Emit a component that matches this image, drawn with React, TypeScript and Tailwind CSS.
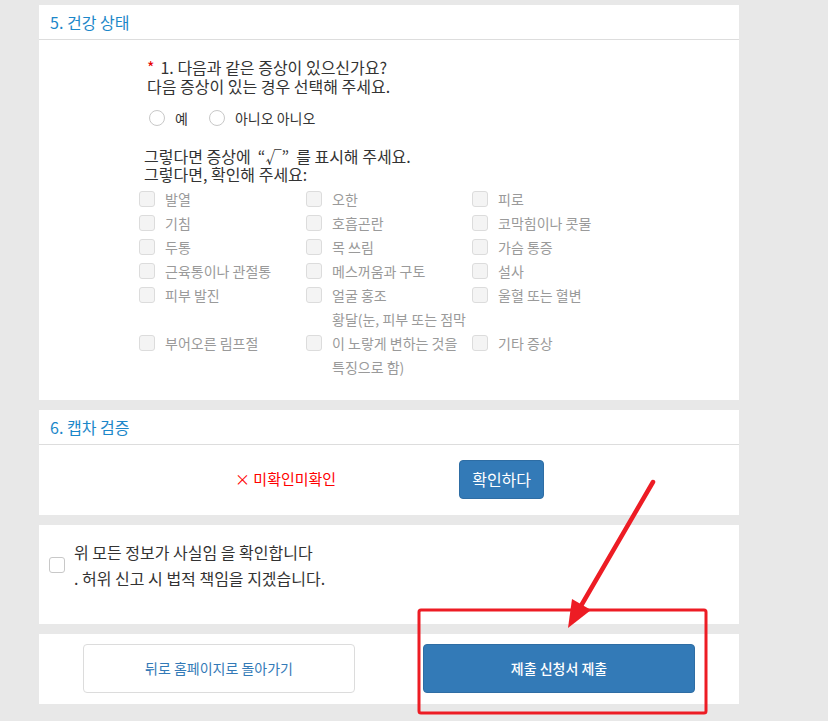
const FONT = { fontFamily: '"Malgun Gothic", "Noto Sans CJK KR", "Noto Sans", sans-serif' };

const ROWS: string[][] = [
  ['발열', '오한', '피로'],
  ['기침', '호흡곤란', '코막힘이나 콧물'],
  ['두통', '목 쓰림', '가슴 통증'],
  ['근육통이나 관절통', '메스꺼움과 구토', '설사'],
  ['피부 발진', '얼굴 홍조', '울혈 또는 혈변'],
];

function Check({ label }: { label: React.ReactNode }) {
  return (
    <label className="flex items-center gap-[10px]">
      <span className="w-4 h-4 shrink-0 rounded-[3px] border border-[#dcdcdc] bg-[#f4f4f4]" />
      <span className="text-[14px] leading-6 text-[#9a9a9a]">{label}</span>
    </label>
  );
}

function Radio({ label }: { label: string }) {
  return (
    <label className="flex items-center gap-[10px]">
      <span className="w-4 h-4 rounded-full border border-[#c8c8c8] bg-white" />
      <span className="text-[14px] text-[#333]">{label}</span>
    </label>
  );
}

function Header({ title }: { title: string }) {
  return (
    <div className="h-[35px] border-b border-[#dddddd] pl-[11px] flex items-center text-[16px] text-[#1b87c9]">
      {title}
    </div>
  );
}

export default function App() {
  return (
    <div className="relative min-h-screen bg-[#e8e8e8] pt-[5px] pb-[18px]" style={FONT}>
      <div className="ml-[39px] w-[700px] flex flex-col gap-[10px]">
        {/* 5. 건강 상태 */}
        <section className="bg-white">
          <Header title="5. 건강 상태" />
          <div className="pt-[18px] pb-[21px]">
            <div className="ml-[108px] text-[16px] leading-[19px] text-[#333]">
              <div>
                <span className="text-[#e60000] mr-[6px]">*</span>1. 다음과 같은 증상이 있으신가요?
              </div>
              <div>다음 증상이 있는 경우 선택해 주세요.</div>
            </div>
            <div className="ml-[110px] mt-[10px] h-6 flex items-center gap-[21px]">
              <Radio label="예" />
              <Radio label="아니오 아니오" />
            </div>
            <div className="ml-[105px] mt-[17px] text-[16px] leading-[18px] text-[#333]">
              <div>그렇다면 증상에 &nbsp;“√”&nbsp; 를 표시해 주세요.</div>
              <div>그렇다면, 확인해 주세요:</div>
            </div>
            <div className="ml-[100px] mt-[4px] grid grid-cols-[167px_166px_200px] items-center">
              {ROWS.map((row) => row.map((l) => <Check key={l} label={l} />))}
              <Check label="부어오른 림프절" />
              <Check
                label={
                  <>
                    황달(눈, 피부 또는 점막
                    <br />이 노랗게 변하는 것을
                    <br />특징으로 함)
                  </>
                }
              />
              <Check label="기타 증상" />
            </div>
          </div>
        </section>

        {/* 6. 캡차 검증 */}
        <section className="bg-white">
          <Header title="6. 캡차 검증" />
          <div className="h-[70px] pb-[2px] flex items-center pl-[196px]">
            <span className="text-[15px] text-[#ff0000]">× 미확인미확인</span>
            <button className="ml-[123px] h-[39px] px-3 rounded-[4px] bg-[#337ab7] border border-[#2e6da4] text-white text-[16px]">
              확인하다
            </button>
          </div>
        </section>

        {/* 확인 */}
        <section className="bg-white h-[99px] pt-[14px] pl-[10px]">
          <div className="flex items-center gap-[9px]">
            <span className="w-4 h-4 shrink-0 rounded-[3px] border border-[#c8c8c8] bg-white" />
            <div className="text-[16px] leading-[26px] text-[#333]">
              <div>위 모든 정보가 사실임 을 확인합니다</div>
              <div>. 허위 신고 시 법적 책임을 지겠습니다.</div>
            </div>
          </div>
        </section>

        {/* 버튼 */}
        <section className="bg-white h-[70px] pt-[10px] pl-[44px] flex items-start gap-[68px]">
          <button className="w-[272px] h-[49px] rounded-[4px] border border-[#dcdcdc] bg-white text-[14px] text-[#337ab7]">
            뒤로 홈페이지로 돌아가기
          </button>
          <button className="w-[272px] h-[49px] rounded-[4px] bg-[#337ab7] border border-[#2e6da4] text-[14px] font-medium text-white">
            제출 신청서 제출
          </button>
        </section>
      </div>

      {/* 주석 화살표 */}
      <svg className="absolute left-0 top-0 pointer-events-none" width={828} height={721}>
        <line x1={653} y1={482} x2={578} y2={611} stroke="#ed1c24" strokeWidth={4.5} strokeLinecap="round" />
        <polygon points="568,628 591,610 572,599" fill="#ed1c24" />
        <rect x={419} y={610} width={287} height={103} rx={2} fill="none" stroke="#ed1c24" strokeWidth={3} />
      </svg>
    </div>
  );
}
